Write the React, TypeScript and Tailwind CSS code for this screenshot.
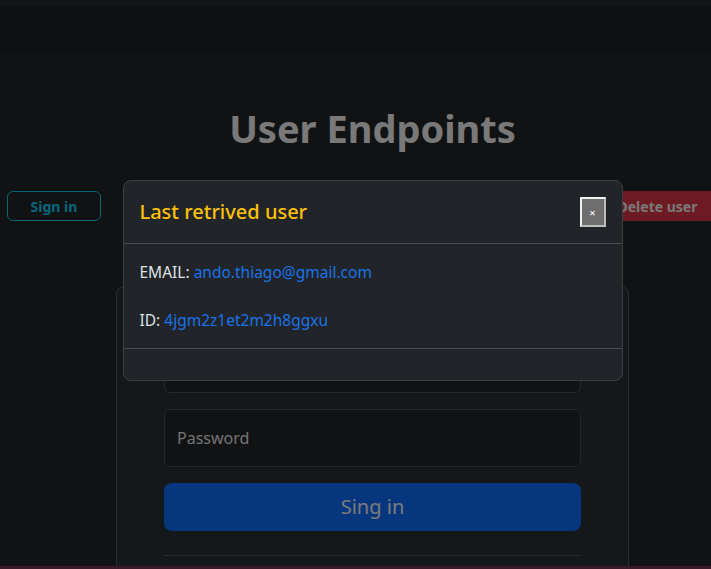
import React from 'react';

const App: React.FC = () => {
  return (
    <div className="w-screen h-screen overflow-hidden relative" style={{ fontFamily: '"Noto Sans", "Open Sans", sans-serif' }}>
      <div className="w-[745px] min-h-screen bg-[#212529] text-[#dee2e6]">
        <div className="h-[7px] bg-[#282a2e]" />
        <nav className="h-[45px] bg-[#1e2024]" />

        <h1 className="mt-[50px] text-center text-[38px] font-bold leading-[52px] text-[#f2f2f2]">User Endpoints</h1>

        <div className="mt-[37px] flex items-center px-[7px]">
          <button className="h-[30px] w-[94px] rounded-md border border-[#0dcaf0] text-[14px] font-bold text-[#0dcaf0]">
            Sign in
          </button>
          <button className="ml-auto mr-[19px] h-[30px] w-[123px] rounded-md bg-[#dc3545] text-[14px] font-bold text-[#f2f2f2]">
            Delete user
          </button>
        </div>

        <div className="mx-auto mt-[65px] w-[513px] rounded-lg border border-[#565b61] bg-[#2b3035] px-[47px] pt-12 pb-20">
          <div className="h-[58px] rounded-md border border-[#495057] bg-[#212529] px-3 flex items-center text-[16px] text-[#e6e6e6]">
            Email
          </div>
          <div className="mt-4 h-[58px] rounded-md border border-[#495057] bg-[#212529] px-3 flex items-center text-[16px] text-[#e6e6e6]">
            Password
          </div>
          <button className="mt-4 h-[48px] w-full rounded-lg bg-[#0d6efd] text-[20px] text-[#f5f5f5]">Sing in</button>
          <hr className="mt-6 border-t border-[#545a60]" />
        </div>
      </div>

      <div className="fixed bottom-0 left-0 right-0 h-[3px] bg-[#76344f]" />

      <div className="fixed inset-0 bg-black/50">
        <div className="w-[745px] flex justify-center pt-[180px]">
          <div className="w-[500px] rounded-lg border border-[#3b3e42] bg-[#212529] text-[#dee2e6]">
            <div className="h-[63px] flex items-center justify-between px-4 border-b border-[#4a4e52]">
              <h5 className="text-[20px] font-medium text-[#ffc107]">Last retrived user</h5>
              <button className="h-[30px] w-[26px] flex items-center justify-center border-2 border-t-[#f0f0f0] border-l-[#f0f0f0] border-b-[#bdbdbd] border-r-[#bdbdbd] bg-[#6e6e6e] text-[11px] leading-none text-white">
                ×
              </button>
            </div>
            <div className="px-4 pt-4 pb-4 flex flex-col gap-6 text-[15.5px] leading-6">
              <p>
                EMAIL: <span className="text-[#1a73e8]">ando.thiago@gmail.com</span>
              </p>
              <p>
                ID: <span className="text-[#1a73e8]">4jgm2z1et2m2h8ggxu</span>
              </p>
            </div>
            <div className="h-[32px] border-t border-[#4a4e52]" />
          </div>
        </div>
      </div>
    </div>
  );
};

export default App;
